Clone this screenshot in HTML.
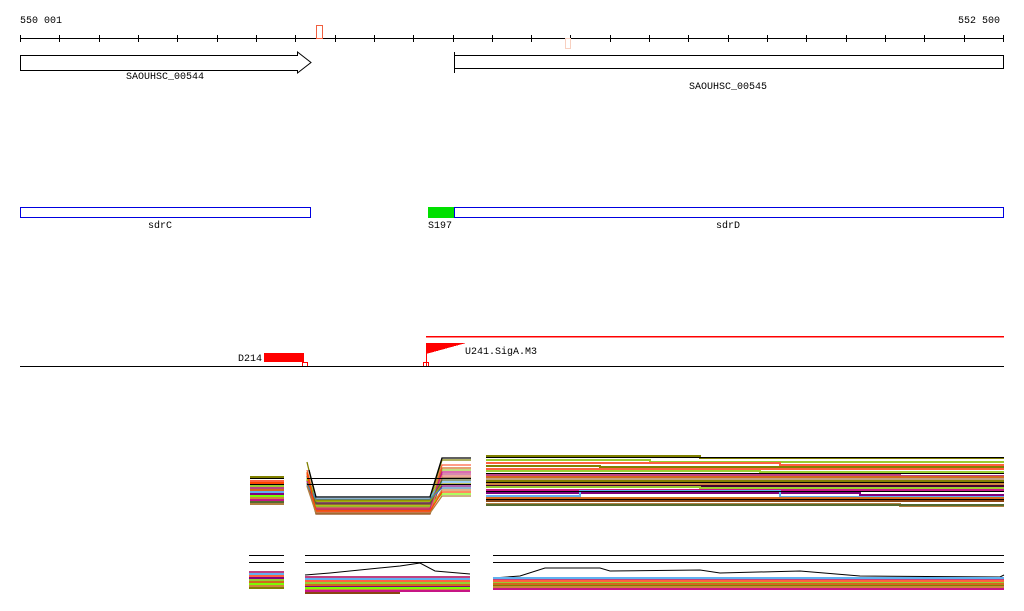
<!DOCTYPE html>
<html><head><meta charset="utf-8">
<style>
html,body{margin:0;padding:0;background:#fff;width:1024px;height:611px;overflow:hidden}
svg text{font-family:"Liberation Mono","DejaVu Sans Mono",monospace;font-size:10px;fill:#000}
</style></head><body>
<svg width="1024" height="611" xmlns="http://www.w3.org/2000/svg" shape-rendering="crispEdges">
<text x="20" y="23">550 001</text>
<text x="958" y="23">552 500</text>
<line x1="20" y1="38.5" x2="1004" y2="38.5" stroke="#000"/>
<path stroke="#000" d="M20.5 35V42M59.5 35V42M99.5 35V42M138.5 35V42M177.5 35V42M217.5 35V42M256.5 35V42M295.5 35V42M335.5 35V42M374.5 35V42M413.5 35V42M453.5 35V42M492.5 35V42M531.5 35V42M570.5 35V42M610.5 35V42M649.5 35V42M688.5 35V42M728.5 35V42M767.5 35V42M806.5 35V42M846.5 35V42M885.5 35V42M924.5 35V42M964.5 35V42M1003.5 35V42"/>
<rect x="316.5" y="25.5" width="6" height="13" fill="none" stroke="#f06040"/>
<rect x="565.5" y="38.5" width="5" height="10" fill="none" stroke="#f8d0c0"/>
<path d="M20.5 55.5 H297.5 V52 L311 62.5 L297.5 73 V70.5 H20.5 Z" fill="#fff" stroke="#000" shape-rendering="auto"/>
<text x="126" y="79">SAOUHSC_00544</text>
<line x1="454.5" y1="52" x2="454.5" y2="73" stroke="#000"/>
<rect x="454.5" y="55.5" width="549" height="13" fill="#fff" stroke="#000"/>
<text x="689" y="89">SAOUHSC_00545</text>
<rect x="20.5" y="207.5" width="290" height="10" fill="#fff" stroke="#0000e0"/>
<text x="148" y="228">sdrC</text>
<rect x="428" y="207" width="26" height="11" fill="#00e000"/>
<rect x="454.5" y="207.5" width="549" height="10" fill="#fff" stroke="#0000e0"/>
<text x="428" y="228">S197</text>
<text x="716" y="228">sdrD</text>
<rect x="426" y="336" width="578" height="1.5" fill="#f00"/>
<rect x="264" y="353" width="40" height="9" fill="#f00"/>
<text x="238" y="361">D214</text>
<rect x="302.5" y="362.5" width="5" height="4" fill="none" stroke="#f00"/>
<line x1="426.5" y1="343" x2="426.5" y2="366" stroke="#f00"/>
<path d="M426 343 H466 L426 354 Z" fill="#f00"/>
<rect x="423.5" y="362.5" width="5" height="4" fill="none" stroke="#f00"/>
<text x="465" y="354">U241.SigA.M3</text>
<line x1="20" y1="366.5" x2="1004" y2="366.5" stroke="#000"/>

<g fill="none" stroke-width="2">
<!-- panel 1 top -->
<path stroke="#808000" d="M250 477H284"/>
<path stroke="#ff6040" d="M250 481H284"/><path stroke="#9acd32" d="M250 486H284"/>
<path stroke="#c04080" d="M250 488H284"/><path stroke="#d2691e" d="M250 490H284"/>
<path stroke="#60b0f0" d="M250 492H284"/><path stroke="#800080" d="M250 494H284"/>
<path stroke="#7cfc00" d="M250 496H284"/><path stroke="#cd853f" d="M250 498H284"/>
<path stroke="#c71585" d="M250 500H284"/><path stroke="#556b2f" d="M250 502H284"/>
<path stroke="#b08040" d="M250 504H284"/><path stroke="#ff4500" d="M250 483H284"/>
<path stroke="#000" stroke-width="1" d="M250 478.5H284M250 484.5H284"/>
<!-- panel 2 U -->
<g shape-rendering="auto" stroke-width="1.3">
<path stroke="#808000" d="M307 462 L316 500 H430 L442 460 H471"/>
<path stroke="#ff6040" d="M307 470 L316 505 H430 L442 465 H471"/>
<path stroke="#9acd32" d="M307 475 L316 502 H430 L442 470 H471"/>
<path stroke="#c04080" d="M307 478 L316 507 H430 L442 474 H471"/>
<path stroke="#d2691e" d="M307 472 L316 510 H430 L442 468 H471"/>
<path stroke="#8b4513" d="M307 480 L316 514 H430 L442 478 H471"/>
<path stroke="#60b0f0" d="M307 482 L316 497 H430 L442 482 H471"/>
<path stroke="#800080" d="M307 476 L316 503 H430 L442 486 H471"/>
<path stroke="#cd853f" d="M307 484 L316 508 H430 L442 490 H471"/>
<path stroke="#7cfc00" d="M307 479 L316 506 H430 L442 494 H471"/>
<path stroke="#c71585" d="M307 481 L316 509 H430 L442 472 H471"/>
<path stroke="#e07060" d="M307 474 L316 512 H430 L442 476 H471"/>
<path stroke="#556b2f" d="M307 483 L316 504 H430 L442 480 H471"/>
<path stroke="#a0a000" d="M307 477 L316 501 H430 L442 484 H471"/>
<path stroke="#4682b4" d="M307 485 L316 499 H430 L442 488 H471"/>
<path stroke="#ff4500" d="M307 473 L316 511 H430 L442 492 H471"/>
<path stroke="#b08040" d="M307 486 L316 513 H430 L442 496 H471"/>
<path stroke="#000" d="M309 470 L316 497 H430 L442 458 H471"/>
</g>
<path stroke="#000" stroke-width="1" d="M307 478.5H471M307 484.5H471"/>
<!-- panel 3 top -->
<path stroke="#808000" d="M486 456H700V458H1004"/>
<path stroke="#9acd32" d="M486 460H650V462H1004"/>
<path stroke="#ff6040" d="M486 463H780V465H1004"/>
<path stroke="#808000" d="M486 466H600V467H1004"/>
<path stroke="#ff6040" d="M486 469H1004"/>
<path stroke="#9acd32" d="M486 471H760V472H1004"/>
<path stroke="#c04080" d="M486 475H900V476H1004"/>
<path stroke="#d2691e" d="M486 477H1004"/>
<path stroke="#c0a080" d="M486 479H1004"/>
<path stroke="#808000" d="M486 481H1004"/>
<path stroke="#cd853f" d="M486 484H1004"/>
<path stroke="#400030" d="M486 486H1004"/>
<path stroke="#9acd32" d="M486 487H700V488H1004"/>
<path stroke="#c71585" d="M486 490H1004"/>
<path stroke="#800080" d="M486 493H860V495H1004"/>
<path stroke="#60b0f0" d="M486 496H580V491H780V497H1004"/>
<path stroke="#d2691e" d="M486 498H1004"/>
<path stroke="#8b4513" d="M486 501H1004"/>
<path stroke="#b08040" d="M486 504H900V506H1004"/>
<path stroke="#556b2f" d="M486 505H1004"/>
<path stroke="#000" stroke-width="1" d="M486 457.5H1004M486 473.5H1004M486 482.5H1004M486 491.5H1004M486 499.5H1004"/>
<!-- bottom -->
<path stroke="#000" stroke-width="1" d="M249 555.5H284M249 562.5H284M305 555.5H470M305 562.5H470M493 555.5H1004M493 562.5H1004"/>
<path stroke="#c04080" d="M249 572H284"/><path stroke="#60b0f0" d="M249 574H284"/>
<path stroke="#ff6040" d="M249 576H284"/><path stroke="#800080" d="M249 578H284"/>
<path stroke="#9acd32" d="M249 580H284"/><path stroke="#d2691e" d="M249 582H284"/>
<path stroke="#7cfc00" d="M249 584H284"/><path stroke="#cd853f" d="M249 586H284"/>
<path stroke="#808000" d="M249 588H284"/>
<g shape-rendering="auto" stroke-width="1">
<path stroke="#000" d="M305 575 L330 573 L400 566 L420 563 L435 571 L470 574"/>
<path stroke="#000" d="M493 578 L520 576 L545 568 L600 568 L610 571 L700 570 L720 573 L800 571 L860 576 L1000 577 L1004 575"/>
</g>
<path stroke="#c04080" d="M305 577H470"/><path stroke="#60b0f0" d="M305 579H470"/>
<path stroke="#ff6040" d="M305 581H470"/><path stroke="#9acd32" d="M305 583H470"/>
<path stroke="#d2691e" d="M305 585H470"/><path stroke="#800080" d="M305 587H470"/>
<path stroke="#7cfc00" d="M305 588H470"/><path stroke="#cd853f" d="M305 590H470"/>
<path stroke="#c71585" d="M305 591H470"/><path stroke="#8b4513" d="M305 593H400"/>
<path stroke="#60b0f0" d="M493 578H1004"/><path stroke="#c04080" d="M493 580H1004"/>
<path stroke="#ff6040" d="M493 581H1004"/><path stroke="#9acd32" d="M493 583H1004"/>
<path stroke="#d2691e" d="M493 584H1004"/><path stroke="#808000" d="M493 586H1004"/>
<path stroke="#cd853f" d="M493 587H1004"/><path stroke="#c71585" d="M493 589H1004"/>
</g>
</svg>
</body></html>
